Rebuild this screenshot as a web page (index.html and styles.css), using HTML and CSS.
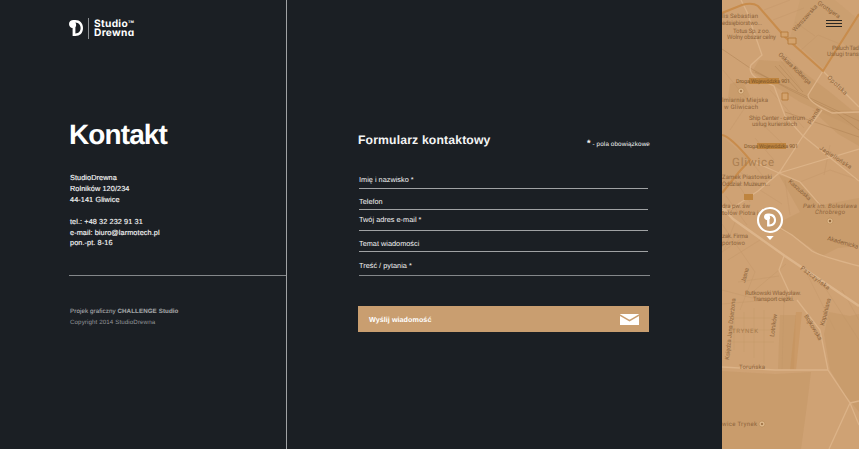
FILE: index.html
```html
<!DOCTYPE html>
<html lang="pl">
<head>
<meta charset="utf-8">
<title>Studio Drewna – Kontakt</title>
<link rel="stylesheet" href="styles.css">
</head>
<body>
<main class="page">
  <section class="info">
    <div class="logo">
      <svg class="logo-mark" viewBox="0 0 14 16"><path class="mark" d="M0 4C0 1.5 2 0 4.5 0H6.3C11 0 14 3.4 14 8C14 13 11 16 6.3 16H3.6V8.1C1.5 8 0 6.3 0 4ZM6.4 13.4C10 13.4 11.6 10.8 11.6 8C11.6 5 9.8 2.7 6.4 2.5C7.5 4.4 7.4 6 6.4 7.2Z"/></svg>
      <div class="logo-name"><span>Studio<small>TM</small></span><span>Drewna</span></div>
    </div>
    <h1>Kontakt</h1>
    <address>StudioDrewna<br>Rolników 120/234<br>44-141 Gliwice<br><br>tel.: +48 32 232 91 31<br>e-mail: biuro@larmotech.pl<br>pon.-pt. 8-16</address>
    <footer><p class="credit">Projek graficzny <b>CHALLENGE Studio</b></p><p>Copyright 2014 StudioDrewna</p></footer>
  </section>
  <section class="contact">
    <header><h2>Formularz kontaktowy</h2><p><b>*</b> - pola obowiązkowe</p></header>
    <form>
      <div class="field name">Imię i nazwisko *</div>
      <div class="field phone">Telefon</div>
      <div class="field mail">Twój adres e-mail *</div>
      <div class="field topic">Temat wiadomości</div>
      <div class="field message">Treść / pytania *</div>
      <button type="button"><span>Wyślij wiadomość</span>
        <svg class="envelope" viewBox="0 0 19 11"><path fill="#fff" d="M0 0H19V11H0Z"/><path fill="none" stroke="#c99e70" stroke-width="1.5" d="M-.5 .9L9.5 6.6L19.5 .9"/></svg>
      </button>
    </form>
  </section>
  <aside class="map">
    <svg class="map-art" viewBox="722 0 137 449">
      <g class="area">
        <path d="M759 60L790 62L830 92L859 116V130L800 102L752 72Z"/>
        <path d="M800 0H835L859 20V60L842 42L823 68L790 38Z" opacity=".5"/>
        <path d="M730 84L742 80L750 96L738 106L728 98Z"/>
        <path d="M812 110H859V146L838 134Z"/>
        <path d="M722 136L750 160L722 192Z" opacity=".5"/>
        <path d="M779 175L800 182L822 205L859 198V246L838 248L822 256L808 246L792 235L772 226L800 212Z"/>
        <path d="M722 371L775 374L811 372L807 405L801 449H722Z"/>
        <path d="M829 312L850 316L859 314V412L846 396L830 370L824 334Z"/>
        <path d="M780 315H796L794 369H778Z"/>
      </g>
      <path class="strip" d="M796 312H802L796 370H790Z"/>
      <g class="streets">
        <path d="M722 224L755 272L740 310M736 220L724 250M722 252L745 236M728 260L760 240M738 282L779 276M755 290L786 264M730 318H780M730 330H775M726 342H774M734 310V350M744 312V352M754 308V358M764 310V364M722 304L791 298M722 290L760 300M784 300L782 370M805 270L835 330M820 280L859 340M842 290L859 320"/>
        <path d="M780 60L800 87M785 54L806 76M795 22L815 36M764 10L790 0M773 20L804 8M723 70L754 108M750 100L730 130M758 120L782 143M755 138L774 160M750 160L770 185M740 172L762 188M735 180L750 202M785 180L790 215M800 182L830 170L859 180M830 145L824 175M770 90L804 128M726 196L747 225M760 190L782 204M801 50L818 35L840 44"/>
      </g>
      <g class="rails"><path d="M722 49L750 68L790 90L835 112L859 130M755 72L810 98L859 121M775 66L798 91M779 65L803 92M785 112L859 137"/></g>
      <g class="roads">
        <path d="M741 0L747 12L762 55L751 65Q748 72 756 78L774 86L785 116L803 136L859 181"/>
        <path d="M859 107L823 71L808 95Q808 102 832 113L859 112"/>
        <path d="M822 110L803 136L779 173L758 191L737 205L722 211M779 173L859 149M779 173L800 182L822 207M750 160L779 173"/>
        <path d="M722 206L733 219M775 225L792 235L812 251Q820 256 859 266M784 256L779 270L791 296M797 300L820 330L828 370L850 403L859 425M722 367L775 370H828M850 403L829 449M850 403L859 401"/>
      </g>
      <path class="avenue" d="M722 207L733 219L785 256L859 306"/>
      <path class="highway" d="M722 13L742 5Q752 2 758 6L785 37L823 71L859 14M722 135Q731 137 750 160L739 172L722 193"/>
      <g class="badge"><path d="M749 78H779V84H749ZM757 143H786V149H757ZM744 194H753V200H744Z"/><path class="ring" d="M781 32H788V37H781ZM788 38H796V44H788ZM782 93H788V100H782Z"/></g>
      <g class="poi"><circle cx="741" cy="91" r="3"/><circle cx="830" cy="221" r="3"/><circle cx="762" cy="424" r="3"/></g>
      <g class="dots"><circle cx="741" cy="91" r="1"/><circle cx="830" cy="221" r="1.2"/><circle cx="762" cy="424" r="1"/></g>
      <g class="labels">
        <text x="722" y="18" textLength="36">lis Sebastian</text>
        <text x="722" y="25" textLength="40">edsiębiorstwo...</text>
        <text x="733" y="33" textLength="37">Totus Sp. z oo.</text>
        <text x="727" y="39" textLength="49">Wolny obszar celny</text>
        <text x="832" y="50" textLength="27">Paluch Tad</text>
        <text x="827" y="56" textLength="32">Usługi trans</text>
        <text class="route" x="736" y="83" textLength="54">Droga Wojewódzka 901</text>
        <text x="722" y="102" textLength="46">lmiarnia Miejska</text>
        <text x="724" y="109" textLength="34">w Gliwicach</text>
        <text x="749" y="120" textLength="56">Ship Center - centrum</text>
        <text x="752" y="126" textLength="45">usług kurierskich</text>
        <text class="route" x="744" y="148" textLength="54">Droga Wojewódzka 901</text>
        <text class="city" x="732" y="166" textLength="42">Gliwice</text>
        <text x="722" y="179" textLength="50">Zamek Piastowski</text>
        <text x="722" y="186" textLength="48">Oddział: Muzeum...</text>
        <text x="722" y="208" textLength="28">dra pw. św</text>
        <text x="722" y="215" textLength="55">tołów Piotra i Pawła</text>
        <g class="park"><text x="803" y="208" textLength="54">Park im. Bolesława</text><text x="815" y="214" textLength="30">Chrobrego</text></g>
        <text x="722" y="238" textLength="26">zak. Firma</text>
        <text x="722" y="245" textLength="23">portowo</text>
        <text x="745" y="295" textLength="56">Rutkowski Władysław.</text>
        <text x="753" y="301" textLength="41">Transport ciężki.</text>
        <text class="district" x="732" y="333" textLength="26">TRYNEK</text>
        <text x="739" y="369" textLength="26">Toruńska</text>
        <text x="722" y="426" textLength="35">wice Trynek</text>
        <text transform="translate(795 32) rotate(-48)" textLength="34">Warszawska</text>
        <text transform="translate(817 4) rotate(34)" textLength="26">Grottgera</text>
        <text transform="translate(778 55) rotate(44)" textLength="43">Oskara Kolberga</text>
        <text transform="translate(827 78) rotate(44)" textLength="25">Opolska</text>
        <text transform="translate(811 125) rotate(-60)" textLength="18">Piwna</text>
        <text transform="translate(819 149) rotate(33)" textLength="37">Jagiellońska</text>
        <text transform="translate(788 182) rotate(42)" textLength="28">Kaszubska</text>
        <text transform="translate(827 240) rotate(16)" textLength="32">Akademicka</text>
        <text transform="translate(800 269) rotate(37)" textLength="35">Pszczyńska</text>
        <text transform="translate(745 283) rotate(-75)" textLength="15">Jasna</text>
        <text transform="translate(729 360) rotate(-84)" textLength="62">Księdza Jana Dzierżona</text>
        <text transform="translate(774 337) rotate(-82)" textLength="23">Lotników</text>
        <text transform="translate(804 316) rotate(59)" textLength="29">Bojkowska</text>
        <text transform="translate(824 326) rotate(-76)" textLength="28">Kopalniana</text>
      </g>
      <g class="pin"><circle cx="770" cy="220" r="12"/><path d="M766.3 236H773.7L770 240Z"/><path class="mark" transform="translate(764 213.6) scale(.86 .81)" d="M0 4C0 1.5 2 0 4.5 0H6.3C11 0 14 3.4 14 8C14 13 11 16 6.3 16H3.6V8.1C1.5 8 0 6.3 0 4ZM6.4 13.4C10 13.4 11.6 10.8 11.6 8C11.6 5 9.8 2.7 6.4 2.5C7.5 4.4 7.4 6 6.4 7.2Z"/></g>
    </svg>
    <div class="menu"><i></i><i></i><i></i></div>
  </aside>
</main>
</body>
</html>
```
FILE: styles.css
```css
* { box-sizing: border-box; }
body, h1, h2, p { margin: 0; }
body { background: #1b1f24; color: #f4f4f4; font-family: "Liberation Sans", Arial, sans-serif; text-rendering: geometricPrecision; }
.page { display: grid; grid-template-columns: 287px 435px 137px; height: 449px; overflow: hidden; }
.mark { fill: #fff; fill-rule: evenodd; }

.info { border-right: 1px solid #a0a2a4; padding: 18px 0 0 69px; }
.logo { display: flex; height: 22px; }
.logo-mark { width: 14px; height: 16px; margin: 2px 0 0 -.5px; }
.logo-name { display: flex; flex-direction: column; margin-left: 5.5px; padding: 2px 0 0 5px; border-left: 1px solid #8c8f92; height: 21px; font: 700 10.2px/9px Inter, sans-serif; letter-spacing: .3px; font-feature-settings: "cv11", "ss03"; color: #fff; }
.logo-name span { display: block; height: 9px; white-space: nowrap; }
.logo-name small { display: inline-block; font-size: 3.6px; line-height: 4px; letter-spacing: 0; vertical-align: 4px; }
h1 { margin-top: 79px; font-size: 28px; line-height: 32px; letter-spacing: -.9px; color: #fff; }
address { margin-top: 22px; padding-left: 1px; height: 102px; font-style: normal; font-size: 7.3px; line-height: 10.9px; letter-spacing: .09px; -webkit-text-stroke: .15px #f4f4f4; }
footer { border-top: 1px solid #84878a; padding: 30px 0 0 1px; font-size: 6.2px; line-height: 11px; letter-spacing: .1px; color: #929497; }
.credit { color: #a2a4a6; -webkit-text-stroke: .1px #a2a4a6; }

.contact { padding: 131px 72px 0 71px; }
header { display: flex; justify-content: space-between; align-items: flex-start; height: 43px; }
h2 { font-size: 12.2px; line-height: 18px; letter-spacing: .16px; white-space: nowrap; }
header p { font-size: 6.3px; line-height: 10px; letter-spacing: .12px; margin-top: 9px; white-space: nowrap; }
header p b { font-size: 9px; line-height: 0; }
.field { margin: 0 2px 0 1px; border-bottom: 1px solid #a0a2a4; font-size: 7.3px; line-height: 10px; letter-spacing: .02px; }
.name { height: 15px; padding-top: 1px; }
.phone { height: 21px; padding-top: 8px; }
.mail { height: 21px; padding-top: 5px; }
.topic { height: 21px; padding-top: 8px; }
.message { height: 24px; padding-top: 9px; margin-right: 0; border-color: #84878a; }
button { display: flex; align-items: center; justify-content: space-between; width: 291px; height: 26px; margin: 30px 0 0; padding: 0 10px 0 11px; border: 0; background: #c99e70; color: #fff; font: 700 7.2px "Liberation Sans", sans-serif; letter-spacing: .04px; text-rendering: inherit; }
.envelope { width: 19px; height: 11px; }

.map { position: relative; background: #cfa274; }
.map-art { display: block; width: 137px; height: 449px; }
.area { fill: #c59767; fill-opacity: .6; }
.strip { fill: #c58f56; opacity: .4; }
.streets { fill: none; stroke: #bf9264; stroke-width: .6; opacity: .55; }
.rails { fill: none; stroke: #ad8152; stroke-width: .8; opacity: .6; }
.roads { fill: none; stroke: #dcb388; stroke-width: 1.3; }
.avenue { fill: none; stroke: #ddb58b; stroke-width: 2.4; }
.highway { fill: none; stroke: #c88c4c; stroke-width: 2.1; }
.badge { fill: #be843f; }
.ring { fill: #d3a26c; stroke: #b37b3d; stroke-width: .9; }
.poi { fill: #dbb588; stroke: #b98b57; stroke-width: .6; }
.dots { fill: #94683b; }
.labels { fill: #8e653c; font: 6.1px Roboto, sans-serif; }
.labels .route { font-size: 5.4px; fill: #7d5528; }
.labels .city { font-size: 11.5px; fill: #aa7e50; }
.labels .district { fill: #a4794c; }
.park { font-style: italic; }
.pin { fill: #fff; }
.pin circle { fill: #c99e70; stroke: #fff; stroke-width: 2.1; }
.menu { position: absolute; top: 20px; right: 17px; width: 16px; display: grid; gap: 2px; }
.menu i { height: 1px; background: #292622; }
```
